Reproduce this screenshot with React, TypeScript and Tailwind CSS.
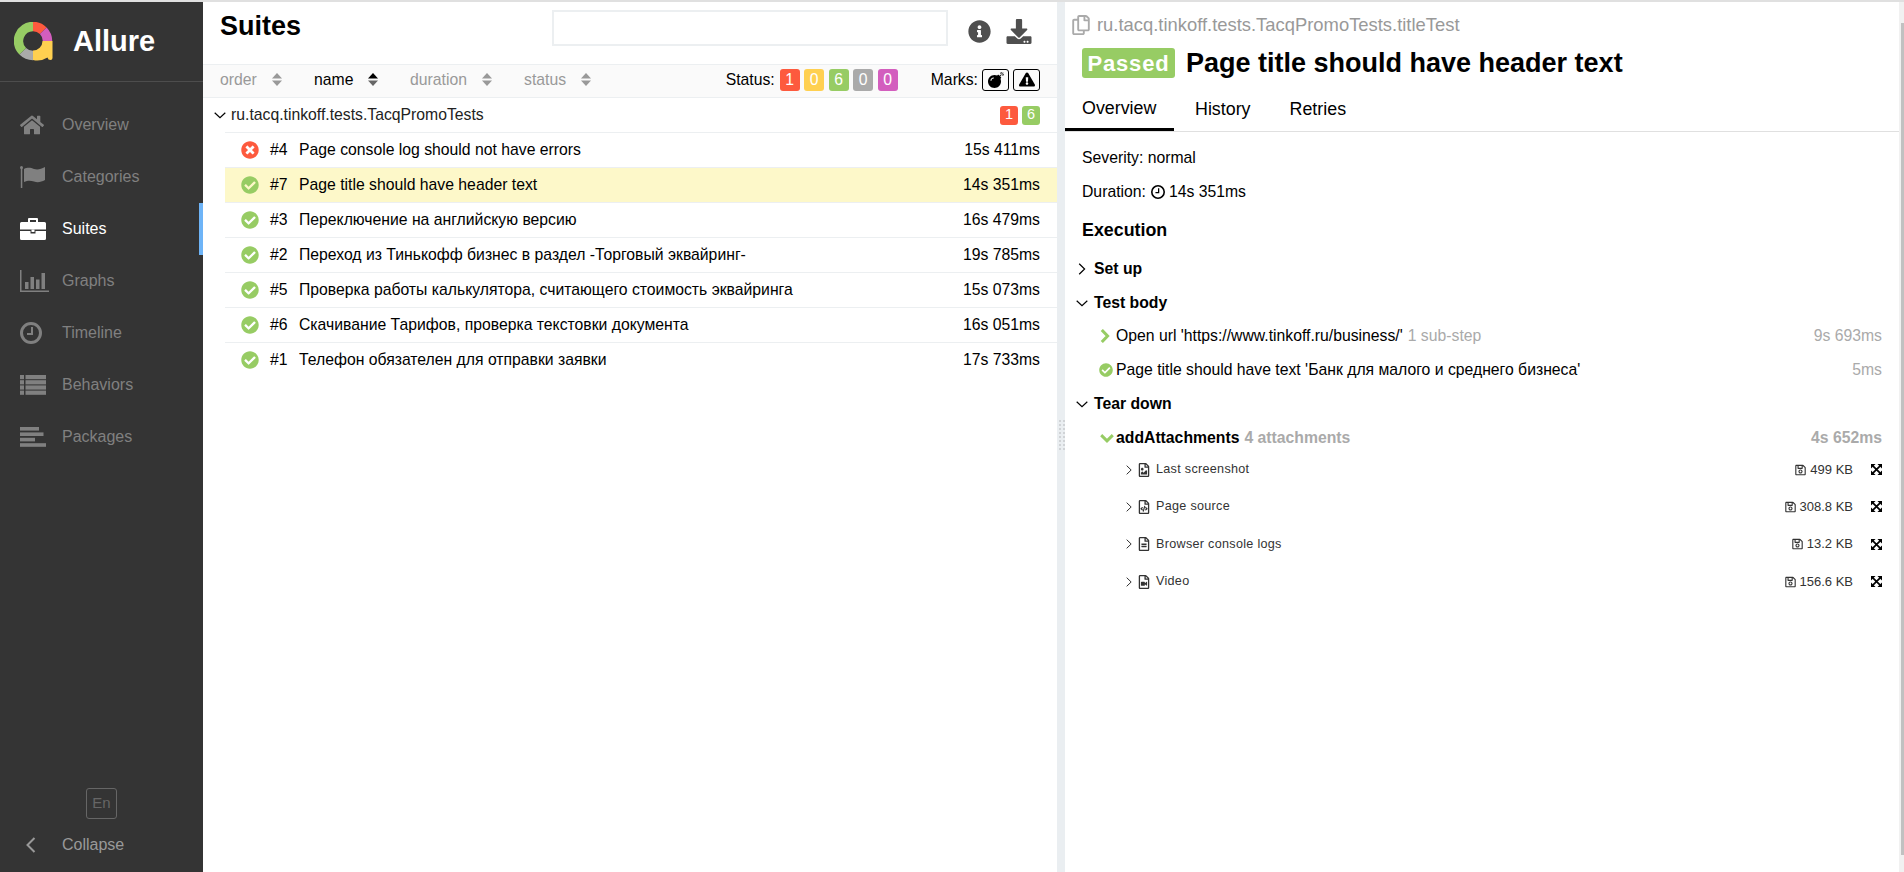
import type { ReactNode } from "react"
import {
  FaHome,
  FaCheckCircle,
  FaTimesCircle,
  FaInfoCircle,
  FaDownload,
  FaBomb,
  FaExclamationTriangle,
  FaRegCopy,
  FaRegSave,
  FaRegFileImage,
  FaRegFileCode,
  FaRegFileAlt,
  FaRegFileVideo,
} from "react-icons/fa"

function FlagIcon() {
  return (
    <svg width="25" height="22" viewBox="0 0 25 22" fill="currentColor">
      <circle cx="1.5" cy="1.5" r="1.5" />
      <rect x="0.8" y="2" width="1.5" height="20" />
      <path d="M4 3 C8 1 11 2 14 3 C18 4 21 3 25 1 V14 C21 16 18 17 14 15.5 C11 14.5 8 14 4 16 Z" />
    </svg>
  )
}

function BriefcaseIcon() {
  return (
    <svg width="26" height="22" viewBox="0 0 26 22" fill="currentColor">
      <path
        fillRule="evenodd"
        d="M9 0 H17 Q18 0 18 1 V4 H24.5 Q26 4 26 5.5 V11.5 H0 V5.5 Q0 4 1.5 4 H8 V1 Q8 0 9 0 Z M10 2 V4 H16 V2 Z"
      />
      <path d="M0 13 H10.5 V15.5 H15.5 V13 H26 V20.5 Q26 22 24.5 22 H1.5 Q0 22 0 20.5 Z" />
      <rect x="11.5" y="11.5" width="3" height="2.5" />
    </svg>
  )
}

function BarsIcon() {
  return (
    <svg width="29" height="22" viewBox="0 0 29 22" fill="currentColor">
      <rect x="0" y="0" width="1.5" height="22" />
      <rect x="0" y="20.5" width="29" height="1.5" />
      <rect x="5" y="12" width="3.5" height="7" />
      <rect x="10.5" y="7" width="3.5" height="12" />
      <rect x="16" y="9.5" width="3.5" height="9.5" />
      <rect x="21.5" y="3" width="3.5" height="16" />
    </svg>
  )
}

function ClockIcon({ size, stroke }: { size: number; stroke: number }) {
  return (
    <svg width={size} height={size} viewBox="0 0 22 22" className="shrink-0">
      <circle cx="11" cy="11" r={11 - stroke / 2} fill="none" stroke="currentColor" strokeWidth={stroke} />
      <path d="M12 5 V12 H7" fill="none" stroke="currentColor" strokeWidth="2" />
    </svg>
  )
}

function ListIcon() {
  return (
    <svg width="26" height="20" viewBox="0 0 26 20" fill="currentColor">
      {[0, 5.2, 10.4, 15.6].map((y) => (
        <g key={y}>
          <rect x="0" y={y} width="4" height="4.2" />
          <rect x="5.5" y={y} width="20.5" height="4.2" />
        </g>
      ))}
    </svg>
  )
}

function StackIcon() {
  return (
    <svg width="26" height="20" viewBox="0 0 26 20" fill="currentColor">
      <rect x="0" y="0" width="19" height="3.6" />
      <rect x="0" y="5.4" width="23.5" height="3.6" />
      <rect x="0" y="10.8" width="15" height="3.6" />
      <rect x="0" y="16.2" width="26" height="3.6" />
    </svg>
  )
}

const navItems = [
  { label: "Overview", icon: <FaHome className="h-[24px] w-[24px]" /> },
  { label: "Categories", icon: <FlagIcon /> },
  { label: "Suites", icon: <BriefcaseIcon />, active: true },
  { label: "Graphs", icon: <BarsIcon /> },
  { label: "Timeline", icon: <ClockIcon size={22} stroke={3} /> },
  { label: "Behaviors", icon: <ListIcon /> },
  { label: "Packages", icon: <StackIcon /> },
]

const testRows = [
  { id: "#4", title: "Page console log should not have errors", time: "15s 411ms", failed: true },
  { id: "#7", title: "Page title should have header text", time: "14s 351ms", selected: true },
  { id: "#3", title: "Переключение на английскую версию", time: "16s 479ms" },
  { id: "#2", title: "Переход из Тинькофф бизнес в раздел -Торговый эквайринг-", time: "19s 785ms" },
  { id: "#5", title: "Проверка работы калькулятора, считающего стоимость эквайринга", time: "15s 073ms" },
  { id: "#6", title: "Скачивание Тарифов, проверка текстовки документа", time: "16s 051ms" },
  { id: "#1", title: "Телефон обязателен для отправки заявки", time: "17s 733ms" },
]

const attachments = [
  { name: "Last screenshot", size: "499 KB", rowH: "h-[37px]", icon: <FaRegFileImage className="h-[14px] w-[12px]" /> },
  { name: "Page source", size: "308.8 KB", rowH: "h-[37px]", icon: <FaRegFileCode className="h-[14px] w-[12px]" /> },
  { name: "Browser console logs", size: "13.2 KB", rowH: "h-[38px]", icon: <FaRegFileAlt className="h-[14px] w-[12px]" /> },
  { name: "Video", size: "156.6 KB", rowH: "h-[37px]", icon: <FaRegFileVideo className="h-[14px] w-[12px]" /> },
]

function Logo() {
  return (
    <svg width="40" height="40" viewBox="0 0 40 40" className="shrink-0">
      <g fill="none" strokeWidth="9.5">
        <path d="M19 33.5 A14.5 14.5 0 0 1 8.75 29.25" stroke="#aaaaaa" />
        <path d="M8.75 29.25 A14.5 14.5 0 0 1 19 4.5" stroke="#97cc64" />
        <path d="M19 4.5 A14.5 14.5 0 0 1 29.25 8.75" stroke="#fd5a3e" />
        <path d="M29.25 8.75 A14.5 14.5 0 0 1 33.5 19" stroke="#d35ebe" />
      </g>
      <path
        d="M38.5 19 V36 Q38.5 38 36.5 38 Q34 38 33.5 35.5 A19 19 0 0 1 19 38 V28.5 A9.5 9.5 0 0 0 28.5 19 Z"
        fill="#ffd050"
      />
    </svg>
  )
}

function Caret({ open, className = "" }: { open?: boolean; className?: string }) {
  return (
    <svg width="12" height="12" viewBox="0 0 12 12" className={className}>
      <path
        d={open ? "M0.7 3.8 L6 8.7 L11.3 3.8" : "M3.2 0.8 L8.6 6 L3.2 11.2"}
        fill="none"
        stroke="currentColor"
        strokeWidth="1.2"
      />
    </svg>
  )
}

function GreenChevron({ open }: { open?: boolean }) {
  if (open) {
    return (
      <svg width="14" height="9" viewBox="0 0 14 9">
        <path d="M1.2 1.2 L7 6.8 L12.8 1.2" fill="none" stroke="#97cc64" strokeWidth="3" />
      </svg>
    )
  }
  return (
    <svg width="10" height="14" viewBox="0 0 10 14">
      <path d="M1.8 1 L7.6 7 L1.8 13" fill="none" stroke="#97cc64" strokeWidth="3" />
    </svg>
  )
}

function SortArrows({ dark }: { dark?: boolean }) {
  return (
    <svg width="10" height="13" viewBox="0 0 10 13" className={dark ? "text-black" : "text-[#999999]"}>
      <path d="M5 0 L10 5.5 H0 Z" fill="currentColor" />
      <path d="M5 13 L10 7.5 H0 Z" fill={dark ? "#666666" : "currentColor"} />
    </svg>
  )
}

function ExpandIcon() {
  return (
    <svg width="11" height="11" viewBox="0 0 12 12" className="text-black">
      <path d="M0 0 H5 L0 5 Z M12 0 V5 L7 0 Z M0 12 V7 L5 12 Z M12 12 H7 L12 7 Z" fill="currentColor" />
      <path d="M2 2 L10 10 M10 2 L2 10" stroke="currentColor" strokeWidth="1.9" />
    </svg>
  )
}

function Badge({ color, children }: { color: string; children: ReactNode }) {
  return (
    <span className={`flex h-[22px] w-[20px] items-center justify-center rounded-[3px] text-[15.75px] text-white ${color}`}>
      {children}
    </span>
  )
}

function SortItem({ label, dark, className }: { label: string; dark?: boolean; className: string }) {
  return (
    <div className={`flex items-center gap-[15px] ${dark ? "text-black" : "text-[#999999]"} ${className}`}>
      <span>{label}</span>
      <SortArrows dark={dark} />
    </div>
  )
}

function Sidebar() {
  return (
    <aside className="flex h-full w-[203px] shrink-0 flex-col bg-[#343434]">
      <div className="flex h-[80px] items-center gap-[19px] border-b border-[#4d4d4d] pl-[14px]">
        <Logo />
        <span className="text-[29px] font-bold text-white">Allure</span>
      </div>
      <nav className="mt-[17px] flex flex-col">
        {navItems.map((item) => (
          <div
            key={item.label}
            className={`flex h-[52px] items-center border-r-4 text-[16px] ${
              item.active ? "border-[#6eb4f7] text-white" : "border-transparent text-[#808080]"
            }`}
          >
            <span className="flex w-[62px] shrink-0 items-center pl-[20px]">{item.icon}</span>
            {item.label}
          </div>
        ))}
      </nav>
      <div className="mt-auto flex flex-col pb-[8px]">
        <div className="ml-[86px] flex h-[31px] w-[31px] items-center justify-center rounded-[3px] border border-[#666666] text-[15px] text-[#666666]">
          En
        </div>
        <div className="mt-[7px] flex h-[38px] items-center text-[16px] text-[#999999]">
          <span className="flex w-[62px] shrink-0 pl-[25px]">
            <svg width="12" height="18" viewBox="0 0 12 18">
              <path d="M9.5 2 L2.5 9 L9.5 16" fill="none" stroke="currentColor" strokeWidth="2" />
            </svg>
          </span>
          Collapse
        </div>
      </div>
    </aside>
  )
}

function SuitesPane() {
  return (
    <section className="flex h-full w-[854px] shrink-0 flex-col text-[15.75px] text-black">
      <div className="flex h-[62px] items-start pt-[8px]">
        <h1 className="ml-[17px] text-[27px] leading-[32px] font-bold">Suites</h1>
        <input className="ml-[251px] h-[36px] w-[396px] border-2 border-[#eceff1]" />
        <FaInfoCircle className="ml-[20px] mt-[10px] h-[23px] w-[23px] text-[#4f4f4f]" />
        <FaDownload className="ml-[15px] mt-[9px] h-[25px] w-[26px] text-[#4f4f4f]" />
      </div>
      <div className="flex h-[34px] items-center border-y border-[#eceff1] bg-[#fafafa] pr-[17px] pb-[3px] pl-[17px]">
        <SortItem label="order" className="w-[94px]" />
        <SortItem label="name" dark className="w-[96px]" />
        <SortItem label="duration" className="w-[114px]" />
        <SortItem label="status" className="" />
        <span className="ml-auto">Status:</span>
        <div className="ml-[5px] flex gap-[4.5px]">
          <Badge color="bg-[#fd5a3e]">1</Badge>
          <Badge color="bg-[#ffd050]">0</Badge>
          <Badge color="bg-[#97cc64]">6</Badge>
          <Badge color="bg-[#aaaaaa]">0</Badge>
          <Badge color="bg-[#d35ebe]">0</Badge>
        </div>
        <span className="ml-[33px]">Marks:</span>
        <div className="ml-[4px] flex gap-[4px]">
          <span className="flex h-[22px] w-[27px] items-center justify-center rounded-[3px] border border-black">
            <FaBomb className="h-[16px] w-[16px]" />
          </span>
          <span className="flex h-[22px] w-[27px] items-center justify-center rounded-[3px] border border-black">
            <FaExclamationTriangle className="h-[15px] w-[16px]" />
          </span>
        </div>
      </div>
      <div className="flex h-[34px] items-center pr-[17px] pl-[11px]">
        <Caret open className="mr-[5px]" />
        <span className="text-[#222222]">ru.tacq.tinkoff.tests.TacqPromoTests</span>
        <div className="ml-auto flex gap-[4px] text-[14.5px]">
          <span className="flex h-[19px] w-[18px] items-center justify-center rounded-[3px] bg-[#fd5a3e] text-white">1</span>
          <span className="flex h-[19px] w-[18px] items-center justify-center rounded-[3px] bg-[#97cc64] text-white">6</span>
        </div>
      </div>
      <div className="ml-[22px]">
        {testRows.map((row) => (
          <div
            key={row.id}
            className={`flex h-[35px] items-center border-t border-[#eceff1] pr-[17px] pl-[16px] ${
              row.selected ? "bg-[#fdf8c9]" : ""
            }`}
          >
            {row.failed ? (
              <FaTimesCircle className="h-[18px] w-[18px] text-[#fd5a3e]" />
            ) : (
              <FaCheckCircle className="h-[18px] w-[18px] text-[#97cc64]" />
            )}
            <span className="ml-[11px] w-[29px]">{row.id}</span>
            <span>{row.title}</span>
            <span className="ml-auto">{row.time}</span>
          </div>
        ))}
      </div>
    </section>
  )
}

function Splitter() {
  return (
    <div className="flex h-full w-[8px] shrink-0 items-center bg-[#eaeef1] pb-[5px] pl-[2px]">
      <div className="grid grid-cols-2 gap-x-[2px] gap-y-[2px]">
        {Array.from({ length: 16 }).map((_, i) => (
          <span key={i} className="h-[2px] w-[2px] bg-[#d0d3d6]" />
        ))}
      </div>
    </div>
  )
}

function DetailPane() {
  return (
    <section className="flex h-full min-w-0 flex-1 flex-col text-[15.75px] text-black">
      <div className="flex h-[43px] items-center pl-[6px] pt-[2px]">
        <FaRegCopy className="h-[20px] w-[20px] text-[#aaaaaa]" />
        <span className="ml-[6px] text-[18.4px] text-[#999999]">ru.tacq.tinkoff.tests.TacqPromoTests.titleTest</span>
      </div>
      <div className="flex h-[36px] items-center pl-[17px]">
        <span className="flex h-[30px] w-[93px] items-center justify-center rounded-[3px] bg-[#97cc64] text-[22px] font-bold tracking-[0.8px] text-white">
          Passed
        </span>
        <h2 className="ml-[11px] text-[27px] font-bold">Page title should have header text</h2>
      </div>
      <div className="mt-[10px] flex h-[41px] border-b border-[#e0e0e0] text-[17.85px]">
        <div className="flex w-[109px] items-center border-b-[3px] border-black pb-[2px] pl-[17px]">Overview</div>
        <div className="ml-[21px] flex items-center pb-[3px]">History</div>
        <div className="ml-[39px] flex items-center pb-[3px]">Retries</div>
      </div>
      <div className="flex flex-col pr-[17px] pl-[17px]">
        <div className="mt-[16px] leading-[20px]">Severity: normal</div>
        <div className="mt-[14px] flex items-center leading-[20px]">
          Duration:
          <span className="ml-[5px]">
            <ClockIcon size={14} stroke={2.5} />
          </span>
          <span className="ml-[4px]">14s 351ms</span>
        </div>
        <div className="mt-[18px] text-[17.85px] leading-[20px] font-bold">Execution</div>

        <div className="mt-[19px] -ml-[6px] flex h-[20px] items-center font-bold">
          <Caret className="mr-[6px]" />
          Set up
        </div>
        <div className="mt-[14px] -ml-[6px] flex h-[20px] items-center font-bold">
          <Caret open className="mr-[6px]" />
          Test body
        </div>
        <div className="mt-[13px] flex h-[20px] items-center">
          <span className="flex w-[34px] shrink-0 justify-end pr-[6px]">
            <GreenChevron />
          </span>
          <span>Open url 'https://www.tinkoff.ru/business/'</span>
          <span className="ml-[5px] text-[#aaaaaa]">1 sub-step</span>
          <span className="ml-auto text-[#aaaaaa]">9s 693ms</span>
        </div>
        <div className="mt-[14px] flex h-[20px] items-center">
          <span className="flex w-[34px] shrink-0 justify-end pr-[3px]">
            <FaCheckCircle className="h-[14px] w-[14px] text-[#97cc64]" />
          </span>
          <span>Page title should have text 'Банк для малого и среднего бизнеса'</span>
          <span className="ml-auto text-[#aaaaaa]">5ms</span>
        </div>
        <div className="mt-[14px] -ml-[6px] flex h-[20px] items-center font-bold">
          <Caret open className="mr-[6px]" />
          Tear down
        </div>
        <div className="mt-[14px] flex h-[20px] items-center font-bold">
          <span className="flex w-[34px] shrink-0 justify-end pr-[2px]">
            <GreenChevron open />
          </span>
          <span>addAttachments</span>
          <span className="ml-[5px] text-[#aaaaaa]">4 attachments</span>
          <span className="ml-auto text-[#aaaaaa]">4s 652ms</span>
        </div>
        <div className="mt-[3px] flex flex-col">
          {attachments.map((a) => (
            <div key={a.name} className={`flex items-center text-[#333333] ${a.rowH}`}>
              <Caret className="ml-[42px] mr-[4px] h-[10px] w-[10px]" />
              {a.icon}
              <span className="ml-[6px] text-[12.6px] tracking-[0.3px]">{a.name}</span>
              <span className="ml-auto flex items-center gap-[4px] text-[13px]">
                <FaRegSave className="h-[12px] w-[11px]" />
                {a.size}
              </span>
              <span className="ml-[18px] text-black">
                <ExpandIcon />
              </span>
            </div>
          ))}
        </div>
      </div>
    </section>
  )
}

function Scrollbar() {
  return (
    <div className="flex h-full w-[5px] shrink-0 flex-col items-end bg-[#f1f1f1] pt-[21px] pb-[17px]">
      <div className="w-[3px] flex-1 bg-[#c1c1c1]" />
    </div>
  )
}

export default function App() {
  return (
    <div className="flex h-[872px] w-full overflow-hidden border-t-2 border-[#e0e0e0] bg-white font-['Liberation_Sans',Arial,sans-serif]">
      <Sidebar />
      <SuitesPane />
      <Splitter />
      <DetailPane />
      <Scrollbar />
    </div>
  )
}
